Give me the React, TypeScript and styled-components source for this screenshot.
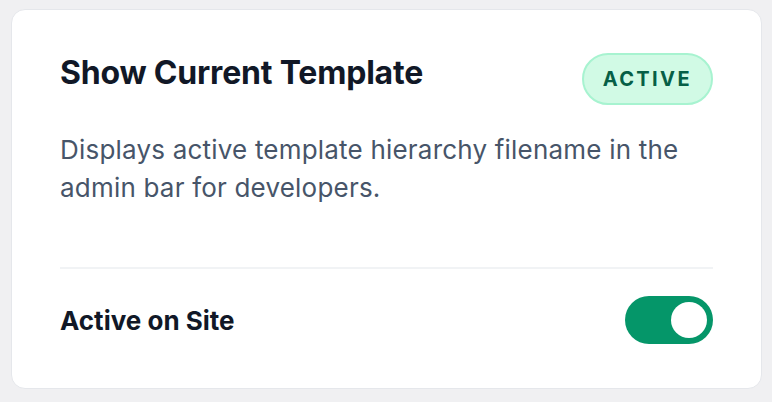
import styled, { createGlobalStyle } from "styled-components"

const GlobalStyle = createGlobalStyle`
  html, body {
    margin: 0;
    padding: 0;
    background: #f0f0f2;
    font-family: Inter, "Noto Sans", "Liberation Sans", sans-serif;
  }
`

const App = () => {
  return (
    <Page>
      <GlobalStyle />
      <Card>
        <Header>
          <Title>Show Current Template</Title>
          <Badge>ACTIVE</Badge>
        </Header>
        <Description>
          Displays active template hierarchy filename in the admin bar for developers.
        </Description>
        <Divider />
        <Footer>
          <FooterLabel>Active on Site</FooterLabel>
          <Toggle role="switch" aria-checked={true} $on={true}>
            <Knob />
          </Toggle>
        </Footer>
      </Card>
    </Page>
  )
}

const Page = styled.div`
  padding: 9px 0 0 11px;
  height: 402px;
  box-sizing: border-box;
`

const Card = styled.div`
  box-sizing: border-box;
  width: 751px;
  height: 380px;
  background: #ffffff;
  border: 1px solid #e5e7eb;
  border-radius: 14px;
  padding: 43px 48px 0 48px;
  display: flex;
  flex-direction: column;
`

const Header = styled.div`
  display: flex;
  justify-content: space-between;
  align-items: flex-start;
`

const Title = styled.h2`
  margin: 0;
  font-size: 32px;
  line-height: 40px;
  font-weight: 700;
  color: #111827;
  letter-spacing: -0.2px;
`

const Badge = styled.span`
  box-sizing: border-box;
  height: 52px;
  padding: 0 19px;
  display: flex;
  align-items: center;
  border-radius: 26px;
  background: #d1fae5;
  border: 2px solid #a7f3d0;
  color: #065f46;
  font-size: 20px;
  font-weight: 700;
  letter-spacing: 2.4px;
`

const Description = styled.p`
  margin: 26px 0 60px 0;
  font-size: 26px;
  line-height: 38px;
  letter-spacing: 0.2px;
  color: #475569;
  max-width: 640px;
`

const Divider = styled.hr`
  margin: 0;
  border: none;
  height: 2px;
  background: #f1f3f5;
`

const Footer = styled.div`
  display: flex;
  justify-content: space-between;
  align-items: center;
  padding-top: 27px;
`

const FooterLabel = styled.span`
  font-size: 26px;
  font-weight: 700;
  color: #111827;
`

const Toggle = styled.button<{ $on: boolean }>`
  box-sizing: border-box;
  width: 88px;
  height: 48px;
  border: none;
  border-radius: 24px;
  padding: 6px;
  background: ${p => (p.$on ? "#059669" : "#d1d5db")};
  display: flex;
  justify-content: ${p => (p.$on ? "flex-end" : "flex-start")};
  cursor: pointer;
`

const Knob = styled.span`
  width: 36px;
  height: 36px;
  border-radius: 50%;
  background: #ffffff;
`

export default App
